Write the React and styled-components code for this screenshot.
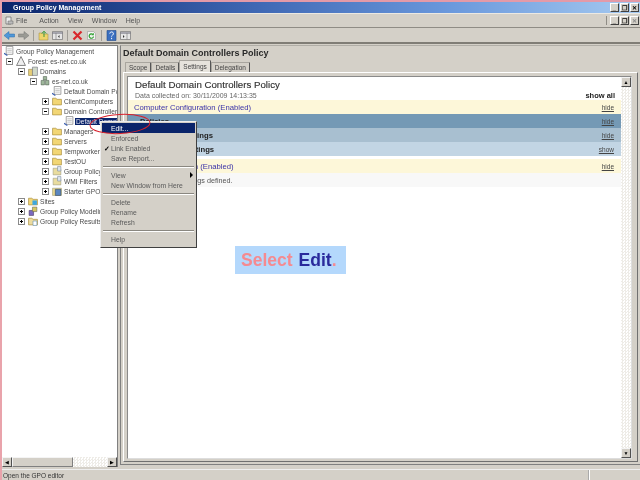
import React from 'react';
import styled, { createGlobalStyle } from 'styled-components';

const Global = createGlobalStyle`
  html, body { margin: 0; padding: 0; background: #fff; }
  * { box-sizing: border-box; }
`;
const Frame = styled.div`
  position: relative; width: 640px; height: 480px; overflow: hidden;
  display: flex; flex-direction: column; background: #d4d0c8;
  border-left: 2px solid #e9a3ab; border-top: 2px solid #e39aa8;
  font-family: "Liberation Sans", Arial, sans-serif; font-size: 7px; color: #3c3c3c;
  filter: blur(0.25px);
`;
const TitleBar = styled.div`
  height: 11px; flex: none; display: flex; align-items: center; justify-content: space-between;
  padding: 0 1px 0 11px;
  background: linear-gradient(90deg, #0a246a 0%, #3f68b4 40%, #6a98dc 70%, #a6caf0 100%);
  color: #fff; font-weight: bold; font-size: 7px;
`;
const WinButtons = styled.div` display: flex; gap: 1px; `;
const WinButton = styled.div`
  width: 9px; height: 9px; background: #d4d0c8; border: 1px solid; border-color: #fff #404040 #404040 #fff;
  display: flex; align-items: center; justify-content: center; color: ${p => p.$off ? '#8a8a8a' : '#000'}; font-size: 6px; font-weight: bold; line-height: 1;
`;
const MenuBar = styled.div`
  height: 15px; flex: none; display: flex; align-items: center; padding: 0 1px 0 3px;
  border-bottom: 1px solid #8f8c85; border-top: 1px solid #ece9e2;
`;
const MenuGlyph = styled.svg` width: 9px; height: 9px; margin-right: 2px; flex: none; `;
const MenuLabel = styled.span` margin-right: ${p => p.$gap}px; color: #555; font-size: 7px; `;
const MdiButtons = styled.div` margin-left: auto; display: flex; gap: 1px; padding-left: 3px; border-left: 1px solid #8f8c85; `;
const ToolBar = styled.div`
  height: 16px; flex: none; display: flex; align-items: center; gap: 3px; padding: 0 2px;
  border-bottom: 2px solid #807d76;
`;
const ToolIcon = styled.svg` width: 11px; height: 11px; flex: none; `;
const ToolSep = styled.div` width: 1px; height: 11px; background: #a09d96; margin: 0 1px; `;
const Main = styled.div` flex: 1; min-height: 0; display: flex; `;
const TreePane = styled.div`
  width: 116px; flex: none; display: flex; flex-direction: column; background: #fff;
  border-top: 1px solid #808080; border-right: 1px solid #808080; margin: 1px 0 2px;
`;
const TreeBody = styled.div` flex: 1; min-height: 0; overflow: hidden; `;
const TreeRow = styled.div`
  height: 10px; display: flex; align-items: center; white-space: nowrap; width: 115px; overflow: hidden;
  padding-left: ${p => p.$flush ? 2 : p.$depth * 12 + 4}px; color: #4a4a4a; font-size: 6.6px;
`;
const Expander = styled.span`
  width: 7px; height: 7px; flex: none; border: 1px solid #8a8a8a; background: #fff; margin-right: 3px;
  position: relative; visibility: ${p => p.$kind ? 'visible' : 'hidden'};
  &::before { content: ''; position: absolute; left: 1px; right: 1px; top: 2px; height: 1px; background: #000; }
  &::after { content: ''; display: ${p => p.$kind === 'plus' ? 'block' : 'none'}; position: absolute; top: 1px; bottom: 1px; left: 2px; width: 1px; background: #000; }
`;
const NodeIcon = styled.svg` width: 10px; height: 10px; flex: none; margin-right: 2px; `;
const Selected = styled.span` background: #0a246a; color: #e8e8f4; padding: 0 1px; margin-left: -1px; `;
const HScroll = styled.div` height: 10px; flex: none; display: flex; background: #d4d0c8; margin-top: 1px; `;
const ScrollBtn = styled.div`
  width: 10px; height: 10px; flex: none; background: #d4d0c8; border: 1px solid; border-color: #f4f4f4 #505050 #505050 #f4f4f4;
  display: flex; align-items: center; justify-content: center; font-size: 5px; color: #000; line-height: 1;
`;
const Thumb = styled.div` width: 61px; height: 10px; background: #d4d0c8; border: 1px solid; border-color: #f4f4f4 #808080 #808080 #f4f4f4; `;
const Dither = styled.div`
  flex: 1; background: repeating-conic-gradient(#eeece7 0% 25%, #fff 0% 50%) 0 0 / 3px 3px;
`;
const RightPane = styled.div` flex: 1; min-width: 0; display: flex; flex-direction: column; margin: 1px 0 4px 2px; border-top: 1px solid #b0ada6; border-left: 1px solid #808080; border-bottom: 1px solid #808080; padding: 1px 1px 2px 2px; `;
const PolicyTitle = styled.div` font-weight: bold; font-size: 9px; height: 12px; line-height: 12px; color: #2a2a2a; `;
const Tabs = styled.div` display: flex; height: 12px; flex: none; padding-left: 2px; align-items: flex-end; margin-top: 1px; `;
const Tab = styled.div`
  height: ${p => p.$active ? 12 : 10}px; padding: 0 3px; display: flex; align-items: center;
  border: 1px solid #a8a59e; border-bottom: none; border-right-color: #555; border-radius: 1px 1px 0 0;
  background: ${p => p.$active ? '#e6e3dc' : '#d4d0c8'}; color: #444; font-size: 6.5px;
`;
const TabPanel = styled.div`
  flex: 1; min-height: 0; display: flex; padding: 3px 5px 2px 3px; margin-right: 1px;
  border: 1px solid #fff; border-right-color: #707070; border-bottom-color: #707070;
`;
const Report = styled.div`
  flex: 1; min-width: 0; display: flex; background: #fff; border: 1px solid #8a8a8a; border-right-color:#ddd; border-bottom-color: #ddd;
`;
const ReportBody = styled.div` flex: 1; min-width: 0; display: flex; flex-direction: column; `;
const ReportHead = styled.div` height: 23px; flex: none; position: relative; padding: 2px 0 0 7px; `;
const ReportTitle = styled.div` font-size: 9.7px; font-weight: normal; color: #333; height: 11px; line-height: 11px; -webkit-text-stroke: 0.15px #333; `;
const Collected = styled.div` font-size: 7px; color: #666; margin-top: 1px; line-height: 9px; white-space: nowrap; `;
const ShowAll = styled.span` position: absolute; right: 6px; bottom: 0; font-weight: bold; font-size: 7.5px; color: #222; `;
const Band = styled.div`
  height: ${p => p.$h || 14}px; flex: none; display: flex; align-items: center; justify-content: space-between;
  padding: 0 7px 0 ${p => p.$pad ?? 6}px; background: ${p => p.$bg}; margin-top: ${p => p.$gap || 0}px;
  color: ${p => p.$color || '#333'}; font-weight: ${p => p.$bold ? 'bold' : 'normal'}; font-size: 7.7px; white-space: nowrap;
`;
const Note = styled.span` font-size: 7.2px; `;
const Toggle = styled.span` color: #444; font-weight: normal; text-decoration: underline; font-size: 6.5px; `;
const VScroll = styled.div` width: 10px; flex: none; display: flex; flex-direction: column; `;
const Status = styled.div`
  height: 11px; flex: none; display: flex; border-top: 1px solid #eee; padding-left: 1px; align-items: center; color: #333; font-size: 6.5px;
`;
const StatusCell = styled.div` flex: 1; `;
const StatusDivider = styled.div` width: 51px; height: 100%; border-left: 1px solid #fff; box-shadow: -1px 0 0 #aaa; `;
const Menu = styled.div`
  position: absolute; left: 98px; top: 119px; width: 97px; height: 127px; padding: 1px;
  background: #d4d0c8; border: 1px solid; border-color: #eee #404040 #404040 #eee; color: #444; z-index: 2;
`;
const MenuRow = styled.div`
  height: ${p => p.$sel ? 10 : 10.4}px; display: flex; align-items: center; padding-left: 9px; position: relative; font-size: 6.8px;
  background: ${p => p.$sel ? '#0a246a' : 'transparent'}; color: ${p => p.$sel ? '#fff' : '#5a5a5a'};
`;
const Check = styled.span` position: absolute; left: 2px; color: #000; font-size: 7px; font-weight: bold; `;
const Arrow = styled.span` position: absolute; right: 2px; border-left: 3px solid #000; border-top: 3px solid transparent; border-bottom: 3px solid transparent; `;
const MenuSep = styled.div` height: 1px; background: #8a8780; margin: 2px 1px 3px; box-shadow: 0 1px 0 #fff; `;
const Ring = styled.svg` position: absolute; left: 85px; top: 109px; width: 66px; height: 26px; z-index: 3; `;
const Callout = styled.div`
  position: absolute; left: 233px; top: 244px; width: 111px; height: 28px; background: #b4d8fc; z-index: 2;
  display: flex; align-items: center; padding-left: 6px; font-size: 17.5px; font-weight: bold; white-space: nowrap;
`;
const Pink = styled.span` color: #f58a90; `;
const Navy = styled.span` color: #2a2a9c; margin-left: 6px; `;

const Folder = () => <NodeIcon viewBox="0 0 9 9"><path d="M.5 2h3l1 1h4v5H.5z" fill="#f2d675" stroke="#a88c3c" strokeWidth=".6"/></NodeIcon>;
const Gpo = () => <NodeIcon viewBox="0 0 9 9"><path d="M2 .5h6v7H2z" fill="#fff" stroke="#777" strokeWidth=".6"/><path d="M3 2.5h4M3 4h4M3 5.5h4" stroke="#999" strokeWidth=".5"/><path d="M0 6.5l3 2" stroke="#3b5fb0" strokeWidth="1.1"/></NodeIcon>;
const Forest = () => <NodeIcon viewBox="0 0 9 9"><path d="M4.5.5L8.5 8.5H.5z" fill="#eee" stroke="#666" strokeWidth=".7"/></NodeIcon>;
const Domains = () => <NodeIcon viewBox="0 0 9 9"><path d="M.5 3h4v5.5h-4z" fill="#e8cf78" stroke="#8a7a40" strokeWidth=".5"/><path d="M4 1h4.5v7.5H4z" fill="#cfd8c8" stroke="#667" strokeWidth=".5"/></NodeIcon>;
const Domain = () => <NodeIcon viewBox="0 0 9 9"><path d="M1 4h3v4H1zM5 4h3v4H5zM3 .5h3v3H3z" fill="#9fb89c" stroke="#4c5c4c" strokeWidth=".5"/></NodeIcon>;
const Filter = () => <NodeIcon viewBox="0 0 9 9"><path d="M1 2h4l1 1h2v5H1z" fill="#e9dc9f" stroke="#998" strokeWidth=".5"/><path d="M5 .5h3v4H5z" fill="#dfe7f0" stroke="#789" strokeWidth=".5"/></NodeIcon>;
const Starter = () => <NodeIcon viewBox="0 0 9 9"><path d="M.5 2h8v6.5h-8z" fill="#e9d88f" stroke="#997" strokeWidth=".5"/><path d="M3 3h5v5.5H3z" fill="#5a86c0" stroke="#345" strokeWidth=".5"/></NodeIcon>;
const Sites = () => <NodeIcon viewBox="0 0 9 9"><path d="M.5 2h3l1 1h4v5H.5z" fill="#f2d675" stroke="#a88c3c" strokeWidth=".6"/><path d="M4 4h4v4H4z" fill="#3fa7e0"/></NodeIcon>;
const Model = () => <NodeIcon viewBox="0 0 9 9"><path d="M1 4h4v4.5H1z" fill="#7a6ac0" stroke="#435" strokeWidth=".5"/><path d="M4 1h4v4H4z" fill="#d8c860" stroke="#665" strokeWidth=".5"/></NodeIcon>;
const Results = () => <NodeIcon viewBox="0 0 9 9"><path d="M.5 2h3l1 1h4v5H.5z" fill="#ecdca0" stroke="#a88c3c" strokeWidth=".6"/><path d="M4.5 4.5h3.5v4H4.5z" fill="#fff" stroke="#58a" strokeWidth=".5"/></NodeIcon>;

const tree = [
  [0, 'none', <Gpo />, 'Group Policy Management'],
  [0, 'minus', <Forest />, 'Forest: es-net.co.uk'],
  [1, 'minus', <Domains />, 'Domains'],
  [2, 'minus', <Domain />, 'es-net.co.uk'],
  [3, null, <Gpo />, 'Default Domain Policy'],
  [3, 'plus', <Folder />, 'ClientComputers'],
  [3, 'minus', <Folder />, 'Domain Controllers'],
  [4, 'leaf', <Gpo />, <Selected>Default Domain Controllers Policy</Selected>],
  [3, 'plus', <Folder />, 'Managers'],
  [3, 'plus', <Folder />, 'Servers'],
  [3, 'plus', <Folder />, 'Tempworkers'],
  [3, 'plus', <Folder />, 'TestOU'],
  [3, 'plus', <Filter />, 'Group Policy Objects'],
  [3, 'plus', <Filter />, 'WMI Filters'],
  [3, 'plus', <Starter />, 'Starter GPOs'],
  [1, 'plus', <Sites />, 'Sites'],
  [1, 'plus', <Model />, 'Group Policy Modeling'],
  [1, 'plus', <Results />, 'Group Policy Results'],
];

const TreeNode = ({ depth, kind, icon, label }) => (
  <TreeRow $depth={depth} $flush={kind === 'none'}>
    {kind !== 'none' && <Expander $kind={kind === 'leaf' ? null : kind} />}
    {icon}{label}
  </TreeRow>
);

const WinSet = ({ off }) => (
  <>
    <WinButton>_</WinButton>
    <WinButton>❐</WinButton>
    <WinButton $off={off}>✕</WinButton>
  </>
);

export default function App() {
  return (
    <>
      <Global />
      <Frame>
        <TitleBar>Group Policy Management<WinButtons><WinSet /></WinButtons></TitleBar>
        <MenuBar>
          <MenuGlyph viewBox="0 0 9 9"><path d="M1 1h5v7H1z" fill="#eee" stroke="#666" strokeWidth=".7"/><path d="M3 5h5v3H3z" fill="#bbb" stroke="#666" strokeWidth=".5"/></MenuGlyph>
          <MenuLabel $gap={12}>File</MenuLabel><MenuLabel $gap={9}>Action</MenuLabel><MenuLabel $gap={9}>View</MenuLabel><MenuLabel $gap={9}>Window</MenuLabel><MenuLabel $gap={0}>Help</MenuLabel>
          <MdiButtons><WinSet off /></MdiButtons>
        </MenuBar>
        <ToolBar>
          <ToolIcon viewBox="0 0 11 11"><path d="M0 5.5L5 1.5v2.5h5.5v3H5v2.5z" fill="#4f97d8" stroke="#2a6aa8" strokeWidth=".5"/></ToolIcon>
          <ToolIcon viewBox="0 0 11 11"><path d="M11 5.5L6 1.5v2.5H.5v3H6v2.5z" fill="#9a9a94" stroke="#777" strokeWidth=".5"/></ToolIcon>
          <ToolSep />
          <ToolIcon viewBox="0 0 11 11"><path d="M1 3h3l1 1h5v6H1z" fill="#eed46c" stroke="#9c8a3c" strokeWidth=".5"/><path d="M6 7V1.5M3.8 3.5L6 1.2 8.2 3.5" fill="none" stroke="#3a9a3a"/></ToolIcon>
          <ToolIcon viewBox="0 0 11 11"><path d="M.5 1.5h10v8H.5z" fill="#e6e6e6" stroke="#777" strokeWidth=".7"/><path d="M.5 3h10" stroke="#667" /><path d="M4 3v6.5" stroke="#777" strokeWidth=".6"/><path d="M7.5 5L6 6.5 7.5 8z" fill="#333"/></ToolIcon>
          <ToolSep />
          <ToolIcon viewBox="0 0 11 11"><path d="M1.5 1.5l8 8M9.5 1.5l-8 8" stroke="#d8282c" strokeWidth="2.2"/></ToolIcon>
          <ToolIcon viewBox="0 0 11 11"><path d="M1.5 1.5h6l2 2v6h-8z" fill="#f4f4f4" stroke="#888" strokeWidth=".5"/><path d="M7.5 6.5a2.2 2.2 0 1 1-.6-2" fill="none" stroke="#2da02d" strokeWidth="1.2"/><path d="M7.8 2.8v2.4H5.4z" fill="#2da02d"/></ToolIcon>
          <ToolSep />
          <ToolIcon viewBox="0 0 11 11"><path d="M1 .5h9v10H1z" fill="#3a6fc0" stroke="#244a88" strokeWidth=".6"/><path d="M3.8 3.6c0-2.2 3.6-2.2 3.6 0 0 1.5-1.8 1.5-1.8 3M5.6 7.8v1.4" fill="none" stroke="#fff" strokeWidth="1"/></ToolIcon>
          <ToolIcon viewBox="0 0 11 11"><path d="M.5 1.5h10v8H.5z" fill="#e6e6e6" stroke="#777" strokeWidth=".7"/><path d="M.5 3h10" stroke="#667"/><path d="M7 3v6.5" stroke="#777" strokeWidth=".6"/><path d="M3 5l1.5 1.5L3 8z" fill="#333"/></ToolIcon>
        </ToolBar>
        <Main>
          <TreePane>
            <TreeBody>
              {tree.map(([d, k, i, l], n) => <TreeNode key={n} depth={d} kind={k} icon={i} label={l} />)}
            </TreeBody>
            <HScroll>
              <ScrollBtn>◀</ScrollBtn><Thumb /><Dither /><ScrollBtn>▶</ScrollBtn>
            </HScroll>
          </TreePane>
          <RightPane>
            <PolicyTitle>Default Domain Controllers Policy</PolicyTitle>
            <Tabs>
              <Tab>Scope</Tab><Tab>Details</Tab><Tab $active>Settings</Tab><Tab>Delegation</Tab>
            </Tabs>
            <TabPanel>
              <Report>
                <ReportBody>
                  <ReportHead>
                    <ReportTitle>Default Domain Controllers Policy</ReportTitle>
                    <Collected>Data collected on: 30/11/2009 14:13:35</Collected>
                    <ShowAll>show all</ShowAll>
                  </ReportHead>
                  <Band $bg="#fdf7d9" $color="#3a32a8">Computer Configuration (Enabled)<Toggle>hide</Toggle></Band>
                  <Band $bg="#7499b5" $pad={12} $color="#222" $bold>Policies<Toggle>hide</Toggle></Band>
                  <Band $bg="#a8bfd0" $pad={20} $color="#222" $bold>Software Settings<Toggle>hide</Toggle></Band>
                  <Band $bg="#c2d5e4" $pad={20} $color="#222" $bold>Windows Settings<Toggle>show</Toggle></Band>
                  <Band $bg="#fdf7d9" $gap={3} $color="#3a32a8">User Configuration (Enabled)<Toggle>hide</Toggle></Band>
                  <Band $bg="#f8f8f8" $pad={41} $color="#555"><Note>No settings defined.</Note></Band>
                </ReportBody>
                <VScroll>
                  <ScrollBtn>▲</ScrollBtn><Dither /><ScrollBtn>▼</ScrollBtn>
                </VScroll>
              </Report>
            </TabPanel>
          </RightPane>
        </Main>
        <Status><StatusCell>Open the GPO editor</StatusCell><StatusDivider /></Status>

        <Menu>
          <MenuRow $sel>Edit...</MenuRow>
          <MenuRow>Enforced</MenuRow>
          <MenuRow><Check>✓</Check>Link Enabled</MenuRow>
          <MenuRow>Save Report...</MenuRow>
          <MenuSep />
          <MenuRow>View<Arrow /></MenuRow>
          <MenuRow>New Window from Here</MenuRow>
          <MenuSep />
          <MenuRow>Delete</MenuRow>
          <MenuRow>Rename</MenuRow>
          <MenuRow>Refresh</MenuRow>
          <MenuSep />
          <MenuRow>Help</MenuRow>
        </Menu>
        <Ring viewBox="0 0 66 26"><ellipse cx="33" cy="13" rx="30" ry="9.5" fill="none" stroke="#d8202c" strokeWidth="1" transform="rotate(-3 33 13)"/></Ring>
        <Callout><Pink>Select</Pink><Navy>Edit</Navy><Pink>.</Pink></Callout>
      </Frame>
    </>
  );
}
